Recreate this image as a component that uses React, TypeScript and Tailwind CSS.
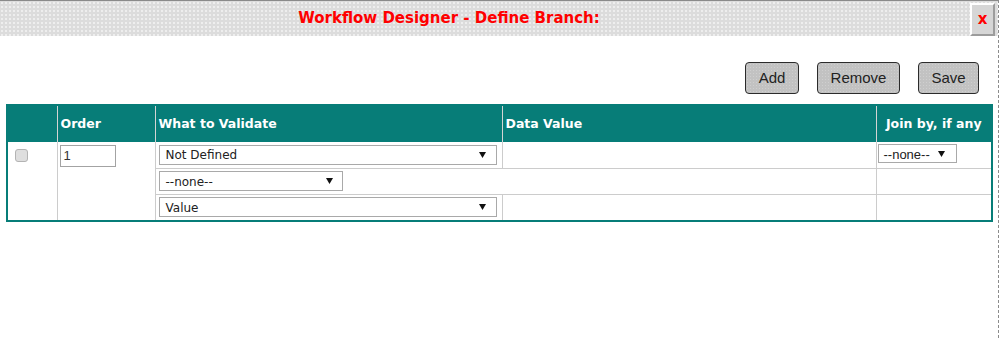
// Workflow designer: define branch dialog

const verdana = "font-['DejaVu_Sans','Verdana',sans-serif]";
const arial = "font-['Liberation_Sans','Arial',sans-serif]";

function Arrow() {
  return (
    <svg width="7" height="6" viewBox="0 0 7 6" className="shrink-0">
      <path d="M0 0h7L3.5 6z" fill="#111" />
    </svg>
  );
}

function FakeSelect({ value, className }: { value: string; className: string }) {
  return (
    <div
      className={`flex items-center justify-between border border-[#a9a9a9] bg-white text-[#222] ${className}`}
    >
      <span className="pt-[1px] leading-none">{value}</span>
      <Arrow />
    </div>
  );
}

const buttonClass = `h-[32px] rounded-[4px] border border-[#2b2b2b] bg-[#c2c2c2] bg-[radial-gradient(circle,#cfcfcf_0.7px,transparent_0.8px)] bg-[length:3px_3px] text-[15px] text-[#222] ${arial}`;

export default function App() {
  return (
    <div className="h-[338px] w-[999px] border-r border-dashed border-[#8c8c8c] bg-white">
      {/* Title bar */}
      <div className="flex h-[36px] border-t border-[#8a8a8a] bg-[#dcdcdc] bg-[radial-gradient(circle,#efefef_0.7px,transparent_0.8px)] bg-[length:4px_4px]">
        <div className="flex flex-1 items-center justify-center pr-[72px]">
          <span className={`text-[15px] font-bold text-[#ff0000] ${verdana}`}>
            Workflow Designer - Define Branch:
          </span>
        </div>
        <button
          className={`mr-[3px] mt-[2px] flex h-[33px] w-[25px] items-center justify-center border-2 border-b-[#9c9c9c] border-l-white border-r-[#9c9c9c] border-t-white bg-[#d6d6d6] text-[15px] font-bold text-[#ff0000] ${verdana}`}
        >
          x
        </button>
      </div>

      {/* Actions */}
      <div className="mt-[26px] flex justify-end gap-[18px] pr-[19px]">
        <button className={`${buttonClass} w-[54px]`}>Add</button>
        <button className={`${buttonClass} w-[83px]`}>Remove</button>
        <button className={`${buttonClass} w-[61px]`}>Save</button>
      </div>

      {/* Branch table */}
      <div className="ml-[6px] mt-[10px] w-[987px] border-2 border-[#077d78]">
        <table className="w-full table-fixed border-collapse">
          <colgroup>
            <col className="w-[49px]" />
            <col className="w-[98px]" />
            <col className="w-[347px]" />
            <col className="w-[374px]" />
            <col className="w-[115px]" />
          </colgroup>
          <thead>
            <tr className={`h-[36px] bg-[#077d78] text-left text-[12.5px] font-bold text-white ${verdana}`}>
              <th className="p-0" />
              <th className="border-l border-[#d4d4d4] p-0 pl-[3px]">Order</th>
              <th className="border-l border-[#d4d4d4] p-0 pl-[3px]">What to Validate</th>
              <th className="border-l border-[#d4d4d4] p-0 pl-[3px]">Data Value</th>
              <th className="border-l border-[#d4d4d4] p-0 text-center">Join by, if any</th>
            </tr>
          </thead>
          <tbody>
            <tr className="h-[26px]">
              <td rowSpan={3} className="p-0 pl-[7px] pt-[7px] align-top">
                <div className="h-[13px] w-[13px] rounded-[3px] border border-[#b3b3b3] bg-[#dedede]" />
              </td>
              <td rowSpan={3} className="border-l border-[#cccccc] p-0 pl-[2px] pt-[3px] align-top">
                <div className={`flex h-[22px] w-[56px] items-center border border-[#a3a3a3] pl-[3px] text-[13px] text-[#333] ${arial}`}>
                  1
                </div>
              </td>
              <td className="border-l border-[#cccccc] p-0 pl-[3px] align-middle">
                <FakeSelect value="Not Defined" className={`h-[20px] w-[338px] pl-[6px] pr-[10px] text-[12px] ${verdana}`} />
              </td>
              <td className="border-l border-[#cccccc] p-0" />
              <td className="border-l border-[#cccccc] p-0 pl-[1px] pt-[2px] align-top">
                <FakeSelect value="--none--" className={`h-[19px] w-[79px] pl-[5px] pr-[11px] text-[13px] ${arial}`} />
              </td>
            </tr>
            <tr className="h-[26px]">
              <td colSpan={2} className="border-l border-t border-[#cccccc] p-0 pl-[3px] align-middle">
                <FakeSelect value="--none--" className={`h-[20px] w-[184px] pl-[6px] pr-[9px] text-[12px] ${verdana}`} />
              </td>
              <td className="border-l border-t border-[#cccccc] p-0" />
            </tr>
            <tr className="h-[26px]">
              <td className="border-l border-t border-[#cccccc] p-0 pl-[3px] align-middle">
                <FakeSelect value="Value" className={`h-[20px] w-[338px] pl-[6px] pr-[10px] text-[12px] ${verdana}`} />
              </td>
              <td className="border-l border-t border-[#cccccc] p-0" />
              <td className="border-l border-t border-[#cccccc] p-0" />
            </tr>
          </tbody>
        </table>
      </div>
    </div>
  );
}
